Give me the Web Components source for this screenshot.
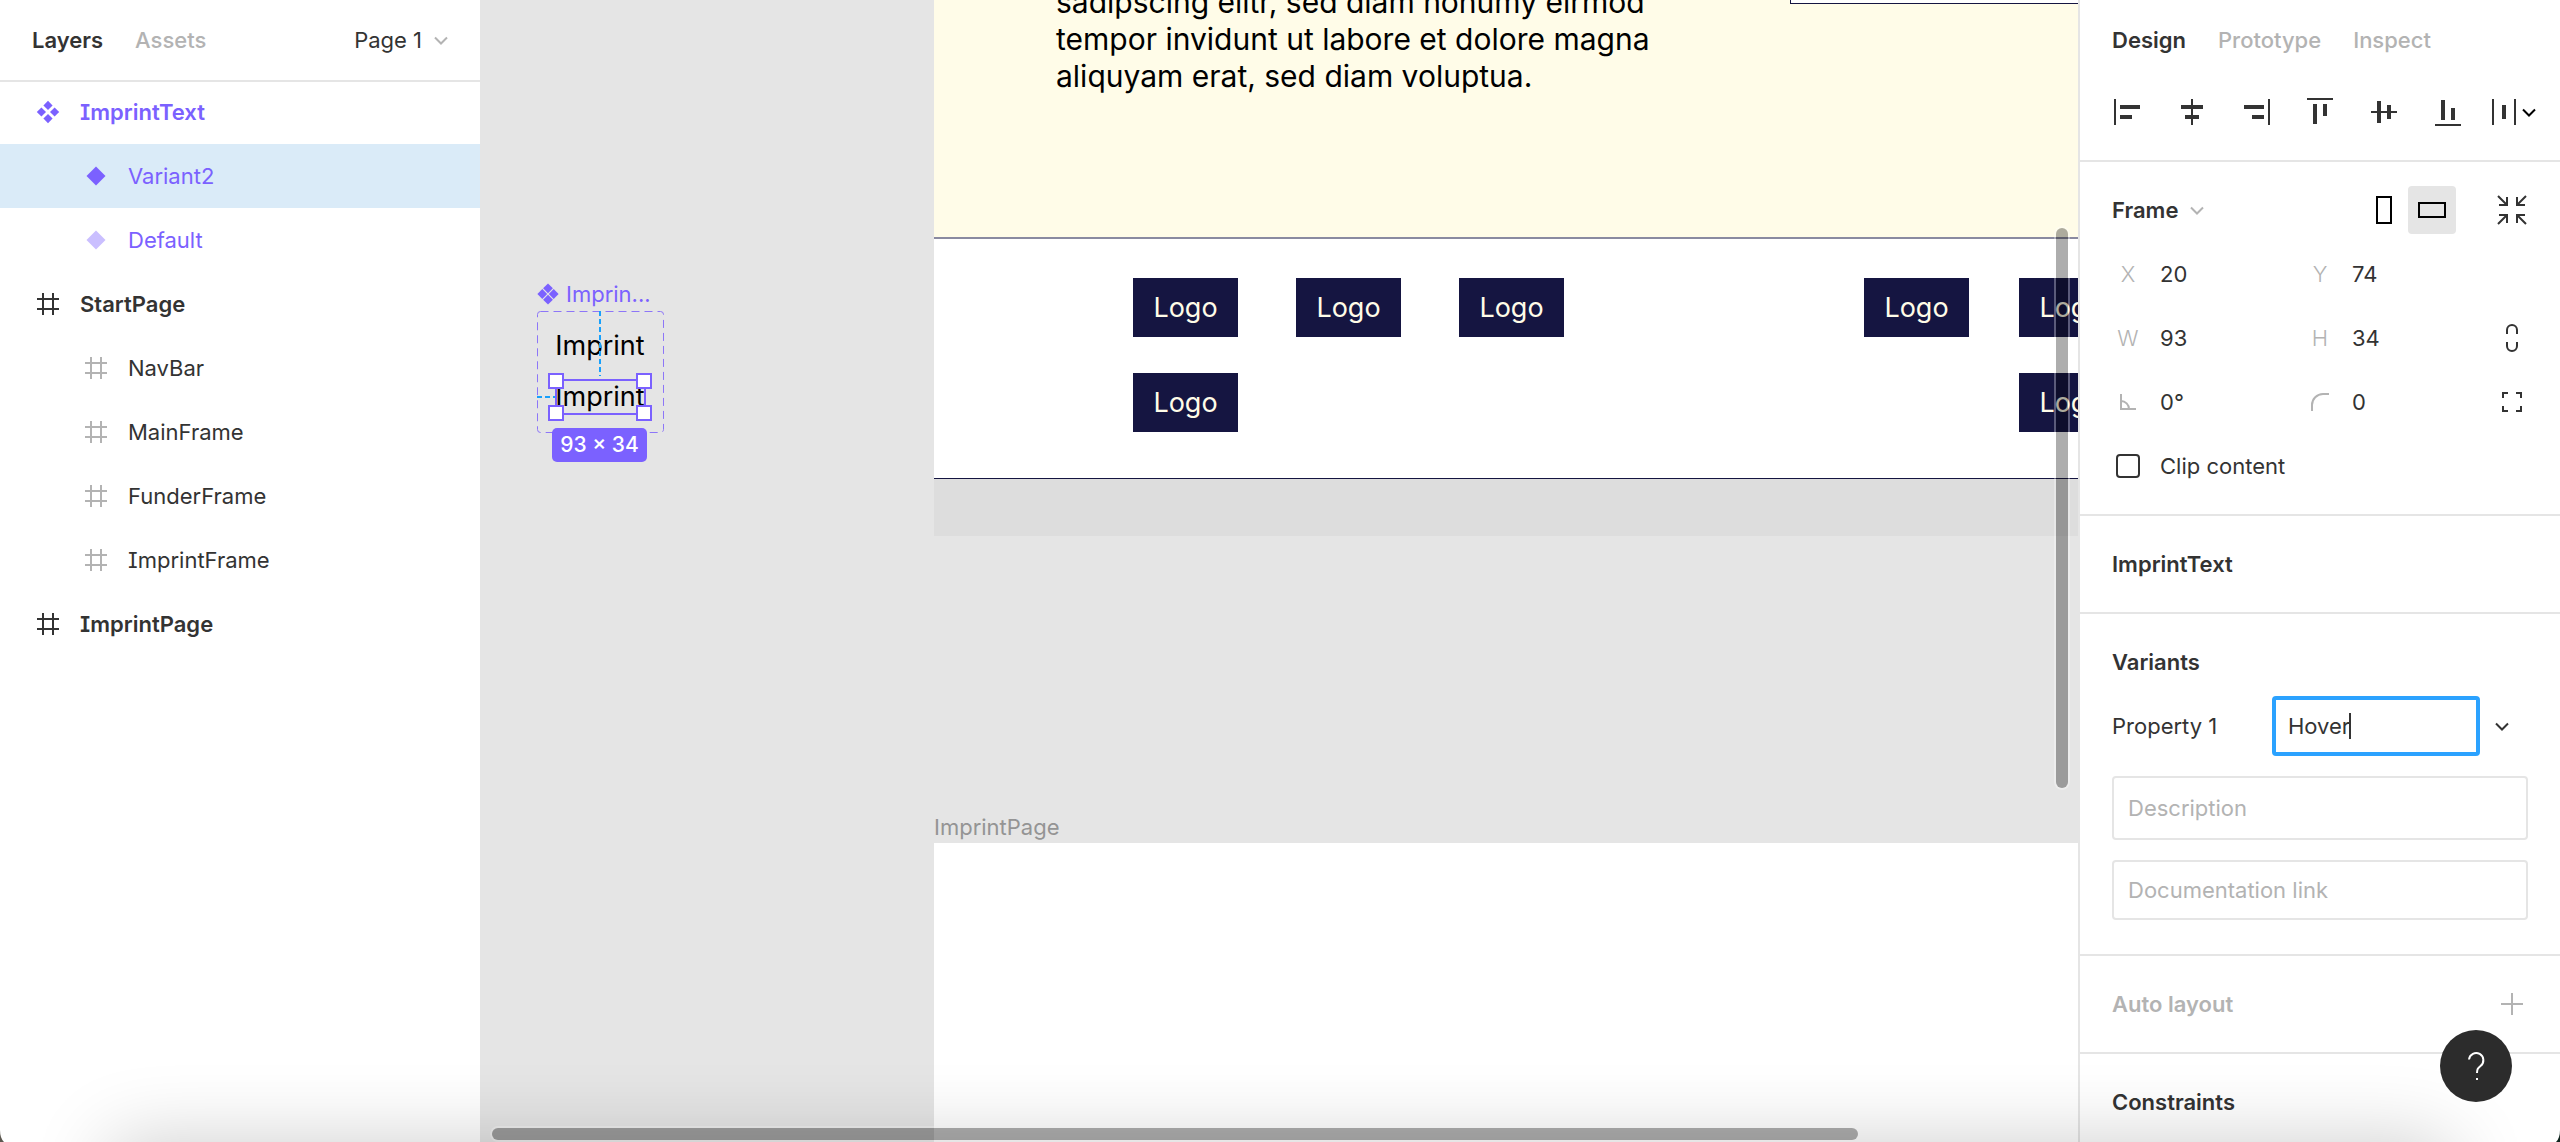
<!DOCTYPE html>
<html lang="en">
<head>
<meta charset="utf-8">
<title>Design editor</title>
<style>
  html, body { margin: 0; height: 100%; }
  body {
    overflow: hidden;
    font: 400 22px/32px Inter, "Liberation Sans", sans-serif;
    color: #333;
    background: #fff;
    --line: #e5e5e5;
    --muted: #b3b3b3;
    --purple: #7b61ff;
    --blue: #18a0fb;
  }
</style>
</head>
<body>
<editor-app></editor-app>
<script>
const RESET = `
  *, *::before, *::after { box-sizing: border-box; }
  button, input, textarea { font: inherit; color: inherit; margin: 0; padding: 0; border: 0; background: none; border-radius: 0; outline: 0; }
  button { cursor: pointer; display: inline-flex; align-items: center; justify-content: center; }
  svg { display: block; flex: none; overflow: visible; }
  h2 { font: inherit; font-weight: 600; margin: 0; }
`;
function define(name, css, html) {
  const template = document.createElement('template');
  customElements.define(name, class extends HTMLElement {
    connectedCallback() {
      if (this.shadowRoot) return;
      const root = this.attachShadow({ mode: 'open' });
      template.innerHTML = `<style>${RESET}${css}</style>` + (typeof html === 'function' ? html(this) : html);
      root.append(template.content.cloneNode(true));
    }
  });
}

/* Icons: each entry is [width, height, markup] */
const diamond = (x, y, r) => `<path d="M${x} ${y - r}l${r} ${r}l${-r} ${r}l${-r} ${-r}z" fill="currentColor"/>`;
const ICONS = {
  component: [32, 32, diamond(16, 9.4, 4.6) + diamond(9.4, 16, 4.6) + diamond(22.6, 16, 4.6) + diamond(16, 22.6, 4.6)],
  variant: [32, 32, diamond(16, 16, 9.5)],
  frame: [32, 32, '<path d="M11 5v22M21 5v22M5 11h22M5 21h22" stroke="currentColor" stroke-width="2"/>'],
  chevron: [14, 14, '<path d="M1 4.5l6 6l6-6" fill="none" stroke="currentColor" stroke-width="2"/>'],
  alignLeft: [32, 32, '<path d="M2 3h2v26H2zM8 9h20v4H8zM8 19h12v4H8z" fill="currentColor"/>'],
  alignCenter: [32, 32, '<path d="M15 3h2v26h-2zM5 9h22v4H5zM9 19h14v4H9z" fill="currentColor"/>'],
  alignRight: [32, 32, '<path d="M28 3h2v26h-2zM4 9h20v4H4zM12 19h12v4H12z" fill="currentColor"/>'],
  alignTop: [32, 32, '<path d="M3 2h26v2H3zM9 8h4v20H9zM19 8h4v12h-4z" fill="currentColor"/>'],
  alignMiddle: [32, 32, '<path d="M3 15h26v2H3zM9 5h4v22H9zM19 9h4v14h-4z" fill="currentColor"/>'],
  alignBottom: [32, 32, '<path d="M3 28h26v2H3zM9 4h4v20H9zM19 12h4v12h-4z" fill="currentColor"/>'],
  distribute: [24, 32, '<path d="M0 3h2v26H0zM22 3h2v26h-2zM10 9h4v14h-4z" fill="currentColor"/>'],
  portrait: [28, 28, '<path d="M7 1h14v26H7z" fill="none" stroke="#000" stroke-width="2"/>'],
  landscape: [28, 28, '<path d="M1 7h26v14H1z" fill="none" stroke="#000" stroke-width="2"/>'],
  shrink: [32, 32, '<path d="M2 2l9 9M11 3v8H3M30 2l-9 9M21 3v8h8M2 30l9-9M11 29v-8H3M30 30l-9-9M21 29v-8h8" fill="none" stroke="currentColor" stroke-width="2"/>'],
  chain: [32, 32, '<path d="M11 12V8a5 5 0 0 1 10 0v4M11 20v4a5 5 0 0 0 10 0v-4" fill="none" stroke="currentColor" stroke-width="2"/>'],
  corners: [32, 32, '<path d="M7 12V7h5M20 7h5v5M25 20v5h-5M12 25H7v-5" fill="none" stroke="currentColor" stroke-width="2"/>'],
  angle: [32, 32, '<path d="M9 8v15h15M9 15a8 8 0 0 1 8 8" fill="none" stroke="currentColor" stroke-width="2"/>'],
  radius: [32, 32, '<path d="M8 25V19A11 11 0 0 1 19 8h6" fill="none" stroke="currentColor" stroke-width="2"/>'],
  plus: [32, 32, '<path d="M16 5v22M5 16h22" stroke="currentColor" stroke-width="2"/>'],
  help: [32, 32, '<path d="M9 9.500a7.200 7.200 0 1 1 11.500 6.500c-2.500 2-3.500 3-3.500 7" fill="none" stroke="#fff" stroke-width="2"/><path d="M16 28h2v2h-2z" fill="#fff"/>']
};
const svg = n => `<svg width="${ICONS[n][0]}" height="${ICONS[n][1]}" viewBox="0 0 ${ICONS[n][0]} ${ICONS[n][1]}" aria-hidden="true">${ICONS[n][2]}</svg>`;
define('ui-icon', ':host { display: block; flex: none; }', h => svg(h.getAttribute('name')));

/* Tab strip button */
define('panel-tab', `
  :host { display: block; }
  button { font-weight: 500; color: var(--muted); }
  :host([active]) button { font-weight: 600; color: #333; }
`, '<button type="button"><slot></slot></button>');

/* One row of the layer tree */
define('layer-row', `
  :host { display: block; }
  button { width: 100%; height: 64px; padding-left: 32px; gap: 16px; justify-content: flex-start; font-feature-settings: "cv08"; }
  ui-icon { color: var(--muted); }
  :host([depth="2"]) button { padding-left: 80px; }
  :host([depth="1"]) button { font-weight: 600; }
  :host([depth="1"]) ui-icon { color: inherit; }
  :host([kind="component"]) button, :host([kind="variant"]) button { color: var(--purple); }
  :host([kind="variant"]) ui-icon { color: #cabfff; }
  :host([selected]) { background: #daebf8; }
  :host([selected]) ui-icon { color: var(--purple); }
`, h => `<button type="button"><ui-icon name="${h.getAttribute('kind')}"></ui-icon><slot></slot></button>`);

define('layers-panel', `
  :host { display: flex; flex-direction: column; width: 480px; flex: none; background: #fff; }
  header { display: flex; align-items: center; gap: 32px; height: 80px; padding: 0 32px; box-shadow: 0 2px 0 var(--line); }
  .page { margin-left: auto; gap: 12px; }
  .page ui-icon { color: var(--muted); }
`, `
  <header>
    <panel-tab active>Layers</panel-tab>
    <panel-tab>Assets</panel-tab>
    <button class="page" type="button">Page 1 <ui-icon name="chevron"></ui-icon></button>
  </header>
  <nav aria-label="Layers">
    <layer-row depth="1" kind="component">ImprintText</layer-row>
    <layer-row depth="2" kind="variant" selected>Variant2</layer-row>
    <layer-row depth="2" kind="variant">Default</layer-row>
    <layer-row depth="1" kind="frame">StartPage</layer-row>
    <layer-row depth="2" kind="frame">NavBar</layer-row>
    <layer-row depth="2" kind="frame">MainFrame</layer-row>
    <layer-row depth="2" kind="frame">FunderFrame</layer-row>
    <layer-row depth="2" kind="frame">ImprintFrame</layer-row>
    <layer-row depth="1" kind="frame">ImprintPage</layer-row>
  </nav>
`);

define('logo-box', `
  :host { display: flex; align-items: center; justify-content: center; width: 105px; height: 59px; background: #151541; color: #fffce8; font-size: 27px; }
`, '<slot></slot>');

/* The StartPage artboard; its upper part lies above the visible canvas */
define('start-page', `
  :host { display: block; background: #fff; }
  .main { position: relative; height: 239px; background: #fffce8; border-bottom: 2px solid #8a8aa0; overflow: hidden; }
  p { position: absolute; left: 122px; bottom: 142px; margin: 0; width: 620px; font-size: 30px; line-height: 37px; color: #000; }
  .box { position: absolute; left: 856px; top: -40px; width: 600px; height: 44px; background: #fff; border: 1px solid #151541; }
  .funders { display: flex; align-items: flex-start; height: 240px; padding: 39px 0 0 199px; border-bottom: 1px solid #151541; }
  .group { display: grid; grid-template-columns: repeat(3, 105px); gap: 36px 58px; }
  .group + .group { grid-template-columns: repeat(2, 105px); column-gap: 50px; margin-left: 300px; }
  .group + .group :last-child { grid-column: 2; }
  .imprint { height: 57px; background: #ddd; }
`, `
  <div class="main">
    <p>sadipscing elitr, sed diam nonumy eirmod tempor invidunt ut labore et dolore magna aliquyam erat, sed diam voluptua.</p>
    <div class="box"></div>
  </div>
  <div class="funders">
    <div class="group"><logo-box>Logo</logo-box><logo-box>Logo</logo-box><logo-box>Logo</logo-box><logo-box>Logo</logo-box></div>
    <div class="group"><logo-box>Logo</logo-box><logo-box>Logo</logo-box><logo-box>Logo</logo-box></div>
  </div>
  <div class="imprint"></div>
`);

/* The component set with its selected variant */
define('variant-set', `
  :host { display: block; width: 126px; }
  .name { display: flex; align-items: center; gap: 7px; height: 32px; color: var(--purple); white-space: nowrap; }
  .set { position: relative; height: 122px; padding-top: 19px; display: flex; flex-direction: column; align-items: center; gap: 19px; color: #000; font-size: 27px; margin-top: 1px; }
  .guides { position: absolute; left: 0; top: 0; }
  .size { position: absolute; top: 117px; left: 15px; width: 95px; height: 34px; display: flex; align-items: center; justify-content: center; border-radius: 5px; background: var(--purple); color: #fff; font-size: 21px; font-weight: 500; white-space: nowrap; }
`, `
  <div class="name"><svg width="22" height="22" viewBox="0 0 22 22" aria-hidden="true">${diamond(11, 5.3, 4.9)}${diamond(5.3, 11, 4.9)}${diamond(16.7, 11, 4.9)}${diamond(11, 16.7, 4.9)}</svg><span>Imprin...</span></div>
  <div class="set">
    <span>Imprint</span><span>Imprint</span>
    <svg class="guides" width="128" height="122" viewBox="0 0 128 122" fill="none" aria-hidden="true">
      <rect x=".5" y=".5" width="126" height="121" rx="3" stroke="#8d76f8" stroke-dasharray="8 5"/>
      <path d="M63 0v65M0 86h18" stroke="#18a0fb" stroke-width="2" stroke-dasharray="5 3"/>
      <rect x="19" y="69" width="89" height="34" stroke="#7b61ff" stroke-width="2"/>
      <path d="M12 63h14v14H12zM100 63h14v14h-14zM12 95h14v14H12zM100 95h14v14h-14z" fill="#fff" stroke="#7b61ff" stroke-width="2"/>
    </svg>
    <span class="size">93 × 34</span>
  </div>
`);

define('design-canvas', `
  :host { display: block; position: relative; flex: 1; min-width: 0; overflow: hidden; background: #e5e5e5; }
  variant-set { position: absolute; left: 57px; top: 278px; }
  start-page { position: absolute; left: 454px; top: 0; width: 1620px; }
  .page { position: absolute; left: 454px; top: 811px; bottom: 0; width: 1620px; display: flex; flex-direction: column; color: #949494; }
  .page div { flex: 1; background: #fff; }
  .bar { position: absolute; border-radius: 8px; background: rgba(0, 0, 0, .32); box-shadow: 0 0 0 2px rgba(255, 255, 255, .3); }
  .v { right: 10px; top: 20%; bottom: 31%; width: 12px; }
  .h { left: 12px; right: 220px; bottom: 2px; height: 12px; }
`, `
  <variant-set></variant-set>
  <start-page></start-page>
  <section class="page">ImprintPage<div></div></section>
  <div class="bar v"></div>
  <div class="bar h"></div>
`);

/* Labelled value: a letter or an icon, then the number */
let fieldId = 0;
define('value-field', `
  :host { display: flex; align-items: center; height: 64px; padding-left: 16px; gap: 16px; }
  label { width: 32px; display: flex; justify-content: center; color: var(--muted); font-weight: 300; }
  input { flex: 1; min-width: 0; height: 32px; }
`, h => {
  const id = 'field' + (++fieldId), icon = h.getAttribute('icon'), name = h.getAttribute('label');
  return `<label for="${id}"${icon ? ` aria-label="${name}"` : ''}>${icon ? `<ui-icon name="${icon}"></ui-icon>` : name}</label><input id="${id}" value="${h.getAttribute('value')}">`;
});

define('panel-section', `
  :host { display: block; padding: 16px; border-bottom: 2px solid var(--line); }
  .head { display: flex; align-items: center; height: 64px; padding-left: 16px; }
  h2 { margin-right: auto; display: flex; align-items: center; gap: 12px; }
  :host([empty]) h2 { color: var(--muted); }
`, '<div class="head"><h2><slot name="title"></slot></h2><slot name="actions"></slot></div><slot></slot>');

define('design-panel', `
  :host { display: flex; flex-direction: column; width: 482px; flex: none; overflow: hidden; background: #fff; border-left: 2px solid var(--line); }
  header { display: flex; align-items: center; gap: 32px; height: 80px; padding: 0 32px; flex: none; }
  .align { display: flex; height: 82px; padding: 0 16px 18px; border-bottom: 2px solid var(--line); flex: none; }
  .align button { width: 64px; height: 64px; }
  .align button:last-child { gap: 6px; padding-left: 4px; }
  .align button:last-child ui-icon + ui-icon { color: #000; }
  panel-section { flex: none; }
  .muted { color: var(--muted); }
  .orient { width: 48px; height: 48px; border-radius: 4px; }
  .orient.on { background: #e5e5e5; }
  .tool { width: 64px; height: 64px; }
  .orient.on + .tool { margin-left: 24px; }
  .grid { display: grid; grid-template-columns: 192px 192px 64px; }
  .clip { display: flex; align-items: center; height: 64px; padding-left: 20px; gap: 20px; }
  .clip input { appearance: none; width: 24px; height: 24px; border: 2px solid #333; border-radius: 4px; }
  .prop { display: flex; align-items: center; height: 64px; padding-left: 16px; }
  .prop label { width: 160px; }
  .edit { position: relative; width: 208px; }
  .edit input { display: block; width: 100%; height: 60px; padding: 0 12px; border: 4px solid #2ba2ff; border-radius: 4px; }
  .edit i { position: absolute; left: 77px; top: 17px; width: 2px; height: 26px; background: #333; }
  .prop button { width: 44px; height: 44px; }
  .texts { display: flex; flex-direction: column; gap: 20px; padding: 18px 16px; }
  .texts textarea, .texts input { display: block; width: 100%; height: 60px; border: 2px solid #e5e5e5; border-radius: 4px; padding: 0 14px; }
  .texts textarea { height: 64px; padding-top: 14px; resize: none; overflow: hidden; }
  ::placeholder { color: var(--muted); opacity: 1; }
`, `
  <header>
    <panel-tab active>Design</panel-tab><panel-tab>Prototype</panel-tab><panel-tab>Inspect</panel-tab>
  </header>
  <div class="align">
    <button type="button" aria-label="Align left"><ui-icon name="alignLeft"></ui-icon></button>
    <button type="button" aria-label="Align horizontal centers"><ui-icon name="alignCenter"></ui-icon></button>
    <button type="button" aria-label="Align right"><ui-icon name="alignRight"></ui-icon></button>
    <button type="button" aria-label="Align top"><ui-icon name="alignTop"></ui-icon></button>
    <button type="button" aria-label="Align vertical centers"><ui-icon name="alignMiddle"></ui-icon></button>
    <button type="button" aria-label="Align bottom"><ui-icon name="alignBottom"></ui-icon></button>
    <button type="button" aria-label="Distribute"><ui-icon name="distribute"></ui-icon><ui-icon name="chevron"></ui-icon></button>
  </div>
  <panel-section>
    <span slot="title">Frame</span><ui-icon slot="title" class="muted" name="chevron"></ui-icon>
    <button slot="actions" class="orient" type="button" aria-label="Portrait"><ui-icon name="portrait"></ui-icon></button>
    <button slot="actions" class="orient on" type="button" aria-label="Landscape"><ui-icon name="landscape"></ui-icon></button>
    <button slot="actions" class="tool" type="button" aria-label="Resize to fit"><ui-icon name="shrink"></ui-icon></button>
    <div class="grid">
      <value-field label="X" value="20"></value-field><value-field label="Y" value="74"></value-field><span></span>
      <value-field label="W" value="93"></value-field><value-field label="H" value="34"></value-field>
      <button class="tool" type="button" aria-label="Constrain proportions"><ui-icon name="chain"></ui-icon></button>
      <value-field label="Rotation" icon="angle" value="0°"></value-field><value-field label="Corner radius" icon="radius" value="0"></value-field>
      <button class="tool" type="button" aria-label="Independent corners"><ui-icon name="corners"></ui-icon></button>
    </div>
    <label class="clip"><input type="checkbox">Clip content</label>
  </panel-section>
  <panel-section><span slot="title">ImprintText</span></panel-section>
  <panel-section>
    <span slot="title">Variants</span>
    <div class="prop">
      <label for="prop">Property 1</label>
      <div class="edit"><input id="prop" value="Hover"><i></i></div>
      <button type="button" aria-label="Values"><ui-icon name="chevron"></ui-icon></button>
    </div>
    <div class="texts">
      <textarea placeholder="Description" aria-label="Description"></textarea>
      <input placeholder="Documentation link" aria-label="Documentation link">
    </div>
  </panel-section>
  <panel-section empty>
    <span slot="title">Auto layout</span>
    <button slot="actions" class="tool muted" type="button" aria-label="Add auto layout"><ui-icon name="plus"></ui-icon></button>
  </panel-section>
  <panel-section><span slot="title">Constraints</span></panel-section>
`);

define('editor-app', `
  :host { display: flex; position: relative; height: 100vh; overflow: hidden; }
  .shade { position: absolute; left: 110px; right: 110px; top: 100%; height: 200px; box-shadow: 0 0 80px rgba(0, 0, 0, .2); pointer-events: none; }
  .help { position: absolute; right: 48px; bottom: 40px; width: 72px; height: 72px; border-radius: 50%; background: #2c2c2c; }
  .corner { position: absolute; bottom: 0; }
  .left { left: 0; }
  .right { right: 0; }
`, `
  <layers-panel></layers-panel>
  <design-canvas></design-canvas>
  <design-panel></design-panel>
  <div class="shade"></div>
  <button class="help" type="button" aria-label="Help"><ui-icon name="help"></ui-icon></button>
  <svg class="corner left" width="4" height="12" viewBox="0 0 4 12" aria-hidden="true"><path d="M0 0Q0 8 4 12H0z" fill="#5c5850"/></svg>
  <svg class="corner right" width="4" height="12" viewBox="0 0 4 12" aria-hidden="true"><path d="M4 0Q4 8 0 12H4z" fill="#10261f"/></svg>
`);
</script>
</body>
</html>
